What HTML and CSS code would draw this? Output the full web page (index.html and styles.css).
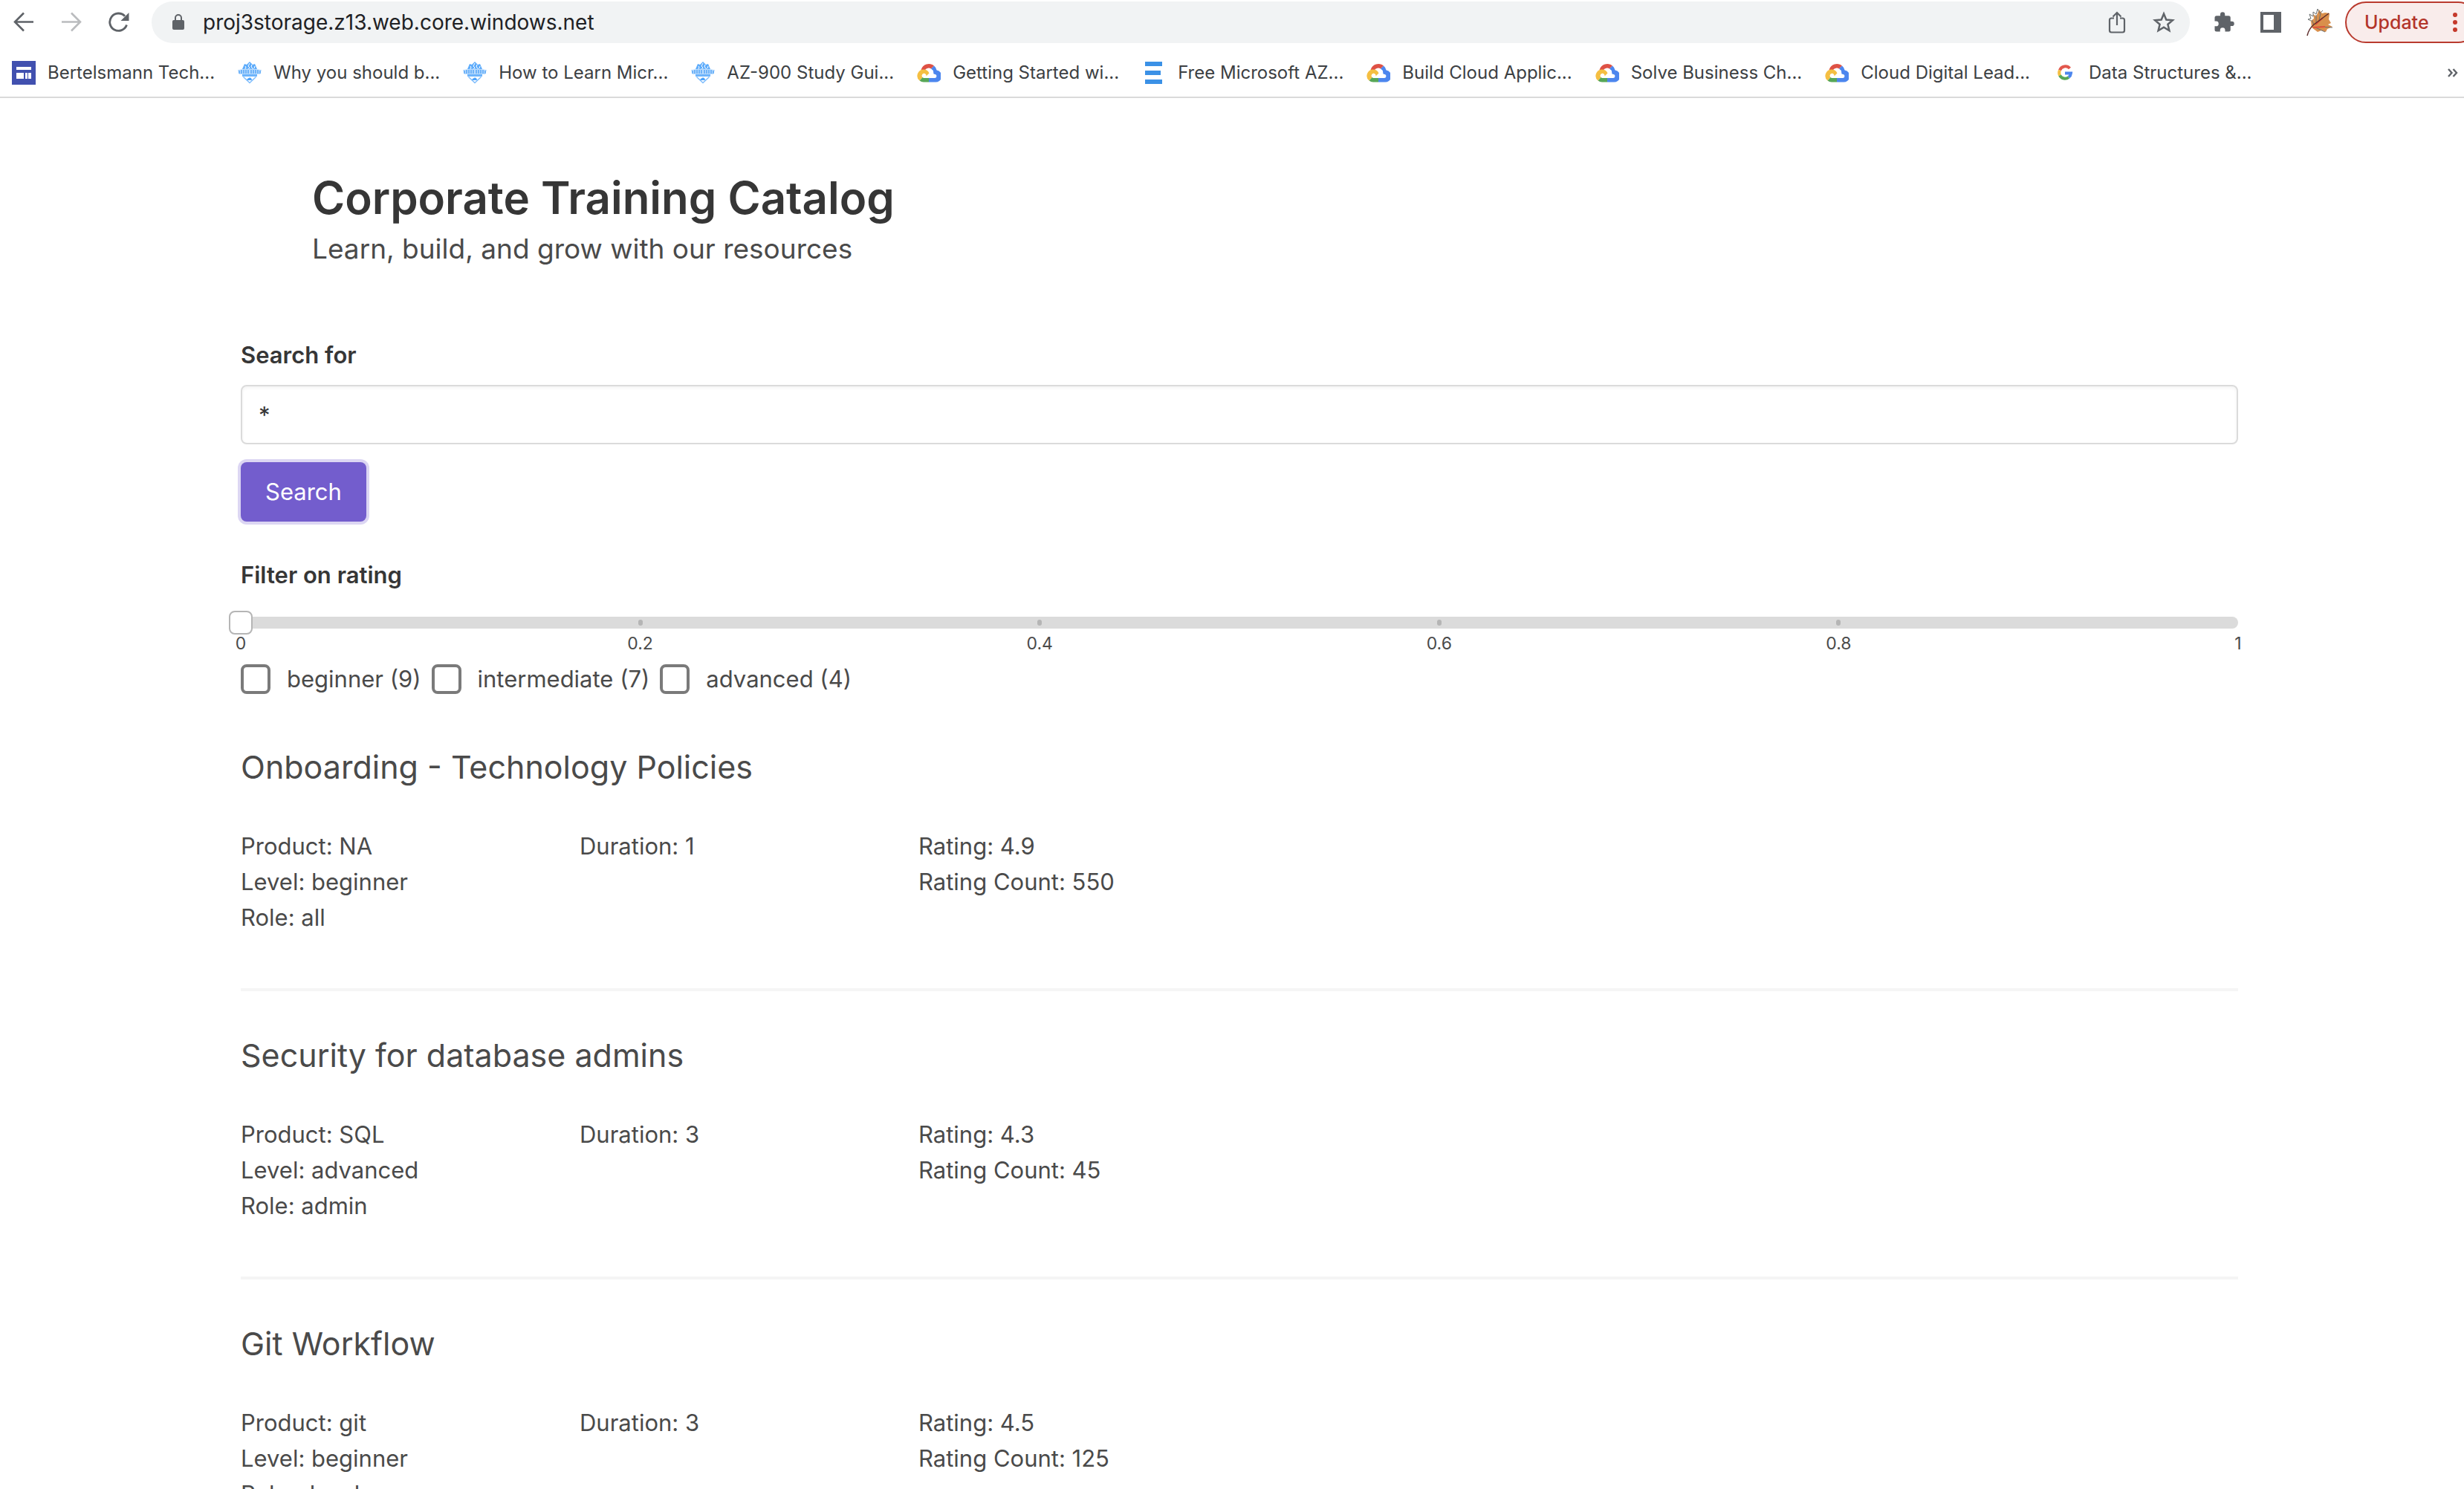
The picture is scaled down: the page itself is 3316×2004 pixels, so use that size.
FILE: index.html
```html
<!DOCTYPE html>
<html lang="en">
<head>
<meta charset="utf-8">
<title>Corporate Training Catalog</title>
<link rel="stylesheet" href="styles.css">
</head>
<body>
<svg class="defs" aria-hidden="true">
  <symbol id="badge" viewBox="0 0 32 32">
    <path d="M16 1l4 4 3-1 3 7H6l3-7 3 1z" fill="#5eacfb"/>
    <path d="M16 3l-2 4 2 2-3 3M19 5l-1 3 3 3M10 7l1 2-2 3M23 7l-1 3" fill="none" stroke="#fff" stroke-width="1"/>
    <path d="M0 12q16-3 32 0l-2 6H2z" fill="#b9dbfd"/>
    <path d="M2 13v4M5 12v5M8 12v5M11 12v5M14 12v5M18 12v5M21 12v5M24 12v5M27 12v5M30 13v4" stroke="#3f98f5" stroke-width="1.200"/>
    <path d="M6 18h20v3H6z" fill="#6db4fb"/>
    <path d="M7.500 21.500L16 29.500l8.500-8" fill="none" stroke="#7fbdfc" stroke-width="1.500"/>
    <path d="M12.500 26a2 2 0 0 1 1.500-2.500 2.600 2.600 0 0 1 4.500.8 1 1 0 0 1 0 1.700z" fill="#4da3fb"/>
  </symbol>
  <symbol id="cloud" viewBox="0 0 32 32">
    <path d="M5.500 12A11 11 0 0 1 23 6.500L19 10.500A6 6 0 0 0 11 12z" fill="#de5145"/>
    <path d="M23 6.500a11 11 0 0 1 3.600 6A8 8 0 0 1 24 28.500h-8V23h8a2.600 2.600 0 0 0 .5-5.100l-2-.5-.3-2A6 6 0 0 0 19 10.500z" fill="#4c86ee"/>
    <path d="M16 23v5.500H9a9 9 0 0 1-5.500-2L7.500 22a3 3 0 0 0 1.500 1z" fill="#57a757"/>
    <path d="M3.500 26.500A8.500 8.500 0 0 1 9 11.500a8.500 8.500 0 0 1 7.500 5l-4 4a3 3 0 1 0-5 1.500z" fill="#f5bf42"/>
  </symbol>
</svg>

<header class="browser">
  <div class="toolbar">
    <nav class="history">
      <button class="icon-button" type="button" aria-label="Back"><svg width="28" height="28" viewBox="0 0 28 28"><path d="M27 13.500H3M14 1.500L2 13.500l12 12" fill="none" stroke="#5f6368" stroke-width="2.600"/></svg></button>
      <button class="icon-button" type="button" aria-label="Forward"><svg width="28" height="28" viewBox="0 0 28 28"><path d="M1 13.500h24M14 1.500l12 12-12 12" fill="none" stroke="#babcbe" stroke-width="2.600"/></svg></button>
      <button class="icon-button" type="button" aria-label="Reload"><svg width="28" height="28" viewBox="0 0 28 28"><path d="M24.500 17.500A11.700 11.700 0 1 1 22 5.700" fill="none" stroke="#5f6368" stroke-width="2.800"/><path d="M27.500 1v11h-11z" fill="#5f6368"/></svg></button>
    </nav>
    <div class="omnibox">
      <svg width="18" height="24" viewBox="0 0 18 24"><rect x="1" y="9" width="16" height="13" rx="2" fill="#5f6368"/><path d="M5 10V6a4 4 0 0 1 8 0v4" fill="none" stroke="#5f6368" stroke-width="2"/></svg>
      <input class="url" type="text" aria-label="Address" value="proj3storage.z13.web.core.windows.net">
      <button class="icon-button" type="button" aria-label="Share"><svg width="28" height="32" viewBox="0 0 28 32"><path d="M10 10.500H6.500a2.500 2.500 0 0 0-2.500 2.500v14a2.500 2.500 0 0 0 2.500 2.500h15a2.500 2.500 0 0 0 2.500-2.500v-14a2.500 2.500 0 0 0-2.500-2.500H18M14 20V4M8.500 8.500L14 3l5.500 5.500" fill="none" stroke="#5f6368" stroke-width="2.200"/></svg></button>
      <button class="icon-button" type="button" aria-label="Bookmark this page"><svg width="30" height="30" viewBox="0 0 30 30"><path d="M15 3.500l3.300 8 8.700.7-6.600 5.600 2 8.400-7.400-4.500-7.400 4.500 2-8.400L3 12.200l8.700-.7z" fill="none" stroke="#5f6368" stroke-width="2.500"/></svg></button>
    </div>
    <div class="actions">
      <button class="icon-button" type="button" aria-label="Extensions"><svg width="30" height="30" viewBox="0 0 24 24"><path d="M20.500 11H19V7a2 2 0 0 0-2-2h-4V3.500a2.500 2.500 0 0 0-5 0V5H4a2 2 0 0 0-2 2v3.800h1.500a2.700 2.700 0 0 1 0 5.400H2V20a2 2 0 0 0 2 2h3.800v-1.500a2.700 2.700 0 0 1 5.400 0V22H17a2 2 0 0 0 2-2v-4h1.500a2.500 2.500 0 0 0 0-5z" fill="#5f6368"/></svg></button>
      <button class="icon-button" type="button" aria-label="Side panel"><svg width="28" height="28" viewBox="0 0 28 28"><path fill-rule="evenodd" d="M0 0h28v28H0zM4 4v20h14V4z" fill="#5f6368"/></svg></button>
      <button class="icon-button" type="button" aria-label="Profile"><svg width="36" height="38" viewBox="0 0 36 38"><path d="M7 26L6 17l4-3-1-6 4 3 4-9 4 5 4-1 6 1-1 8 3 5-4 2 6 3-7 3-2 4-6-2-5 2z" fill="#d98f4b"/><path d="M6 17l-4-2 4-1-2-6 5 3 0-6 4 3 2-7 3 6 4-4M10 22l-3-6M13 19l0-10M17 16l2-9M12 26l13 6M18 25l17 1" fill="none" stroke="#6a6f70" stroke-width="1"/><path d="M9 26l16-1M12 22l10-9" fill="none" stroke="#e0503a" stroke-width="2"/><path d="M1 37q2-9 9-15L30 7" fill="none" stroke="#5e2d2a" stroke-width="1.500"/></svg></button>
      <button class="update" type="button"><span>Update</span><svg width="8" height="28" viewBox="0 0 8 28"><circle cx="4" cy="4" r="3" fill="#c5392b"/><circle cx="4" cy="14" r="3" fill="#c5392b"/><circle cx="4" cy="24" r="3" fill="#c5392b"/></svg></button>
    </div>
  </div>
  <nav class="bookmarks" aria-label="Bookmarks">
    <a href="#"><svg viewBox="0 0 32 32"><path d="M0 0h32v32H0z" fill="#4150af"/><path d="M6 8h20v4H6zM6 16h10v8H6zM18 16h3v8h-3zM22 16h4v8h-4z" fill="#fff"/></svg>Bertelsmann Tech...</a>
    <a href="#"><svg><use href="#badge"/></svg>Why you should b...</a>
    <a href="#"><svg><use href="#badge"/></svg>How to Learn Micr...</a>
    <a href="#"><svg><use href="#badge"/></svg>AZ-900 Study Gui...</a>
    <a href="#"><svg><use href="#cloud"/></svg>Getting Started wi...</a>
    <a href="#"><svg viewBox="0 0 32 32"><path d="M4 1h23v6H4zM4 13h21v6H4zM4 25h23v6H4z" fill="#3b91e6"/></svg>Free Microsoft AZ...</a>
    <a href="#"><svg><use href="#cloud"/></svg>Build Cloud Applic...</a>
    <a href="#"><svg><use href="#cloud"/></svg>Solve Business Ch...</a>
    <a href="#"><svg><use href="#cloud"/></svg>Cloud Digital Lead...</a>
    <a href="#"><svg viewBox="0 0 32 32"><g fill="none" stroke-width="4"><path d="M22.500 10A8 8 0 0 0 9 12.500" stroke="#e2574c"/><path d="M9 12.500a8 8 0 0 0 0 7" stroke="#f5bf42"/><path d="M9 19.500A8 8 0 0 0 21 22" stroke="#57a757"/><path d="M21 22a8 8 0 0 0 3-5.500h-8" stroke="#4c86ee"/></g></svg>Data Structures &amp;...</a>
    <button class="more" type="button" aria-label="More bookmarks"><svg width="14" height="12" viewBox="0 0 14 12"><path d="M1 1l4.500 5L1 11M7.500 1L12 6l-4.500 5" fill="none" stroke="#5f6368" stroke-width="2.400"/></svg></button>
  </nav>
</header>

<main class="page">
  <div class="hero">
    <h1>Corporate Training Catalog</h1>
    <p>Learn, build, and grow with our resources</p>
  </div>

  <form class="search">
    <label for="query">Search for</label>
    <input id="query" type="text" value="*">
    <button type="button">Search</button>
  </form>

  <section class="filters">
    <label for="rating">Filter on rating</label>
    <div class="slider">
      <div class="track"><i></i><i class="dot"></i><i class="dot"></i><i class="dot"></i><i class="dot"></i><i></i></div>
      <input id="rating" type="range" min="0" max="1" step="0.2" value="0">
    </div>
    <div class="scale"><span>0</span><span>0.2</span><span>0.4</span><span>0.6</span><span>0.8</span><span>1</span></div>
    <div class="levels">
      <label><input type="checkbox">beginner (9)</label>
      <label><input type="checkbox">intermediate (7)</label>
      <label><input type="checkbox">advanced (4)</label>
    </div>
  </section>

  <article class="result">
    <h2>Onboarding - Technology Policies</h2>
    <div class="facts">
      <div><p>Product: NA</p><p>Level: beginner</p><p>Role: all</p></div>
      <div><p>Duration: 1</p></div>
      <div><p>Rating: 4.9</p><p>Rating Count: 550</p></div>
    </div>
  </article>
  <article class="result">
    <h2>Security for database admins</h2>
    <div class="facts">
      <div><p>Product: SQL</p><p>Level: advanced</p><p>Role: admin</p></div>
      <div><p>Duration: 3</p></div>
      <div><p>Rating: 4.3</p><p>Rating Count: 45</p></div>
    </div>
  </article>
  <article class="result">
    <h2>Git Workflow</h2>
    <div class="facts">
      <div><p>Product: git</p><p>Level: beginner</p><p>Role: developer</p></div>
      <div><p>Duration: 3</p></div>
      <div><p>Rating: 4.5</p><p>Rating Count: 125</p></div>
    </div>
  </article>
</main>
</body>
</html>
```
FILE: styles.css
```css
* {
  box-sizing: border-box;
}

body {
  margin: 0;
  height: 100vh;
  display: flex;
  flex-direction: column;
  overflow: hidden;
  background: #fff;
  color: #4a4a4a;
  font-family: Inter, "Liberation Sans", sans-serif;
  font-size: 31px;
  line-height: 48px;
}

h1, h2, p {
  margin: 0;
}

button, input {
  font: inherit;
  margin: 0;
}

svg {
  display: block;
  flex: none;
}

.defs {
  position: absolute;
  width: 0;
  height: 0;
}

/* Browser chrome */
.browser {
  flex: none;
  border-bottom: 2px solid #dadada;
  overflow: hidden;
}

.toolbar {
  display: flex;
  align-items: center;
  margin-right: -20px;
  padding: 2px 0;
}

.history {
  display: flex;
  gap: 36px;
  padding: 0 30px 0 18px;
}

.icon-button {
  display: block;
  padding: 0;
  border: 0;
  background: none;
}

.omnibox {
  flex: 1;
  display: flex;
  align-items: center;
  height: 56px;
  padding: 0 20px 0 27px;
  border-radius: 28px;
  background: #f1f3f4;
}

.url {
  flex: 1;
  min-width: 0;
  padding: 0 0 0 24px;
  border: 0;
  background: none;
  color: #202124;
  font-size: 28px;
}

.omnibox .icon-button + .icon-button {
  margin-left: 34px;
}

.actions {
  display: flex;
  align-items: center;
  gap: 34px;
  padding-left: 31px;
}

.update {
  display: flex;
  align-items: center;
  justify-content: space-between;
  width: 180px;
  height: 56px;
  margin-left: -18px;
  padding: 0 26px 0 24px;
  border: 2px solid #b93a2e;
  border-radius: 28px;
  background: #f9eceb;
  color: #b3352a;
  font-size: 25px;
  font-weight: 500;
}

.bookmarks {
  display: flex;
  align-items: center;
  gap: 31px;
  padding: 22px 8px 16px 16px;
}

.bookmarks a {
  display: flex;
  gap: 16px;
  color: #3c4043;
  font-size: 24px;
  line-height: 32px;
  text-decoration: none;
  white-space: nowrap;
}

.bookmarks a svg {
  width: 32px;
  height: 32px;
}

.more {
  margin-left: auto;
  padding: 0;
  border: 0;
  background: none;
}

/* Catalog */
.page {
  flex: 1;
  min-height: 0;
  overflow: hidden;
  padding: 98px 304px 0 324px;
}

.hero {
  padding: 0 96px 94px;
}

h1 {
  color: #363636;
  font-size: 60px;
  font-weight: 600;
  line-height: 72px;
}

.hero p {
  margin-top: 8px;
  font-size: 37px;
  line-height: 50px;
}

.search {
  display: flex;
  flex-direction: column;
  align-items: flex-start;
}

.search > label,
.filters > label {
  display: block;
  color: #363636;
  font-weight: 600;
}

.search label {
  margin-bottom: 16px;
}

.search input {
  width: 100%;
  height: 80px;
  margin-bottom: 24px;
  padding: 0 22px;
  border: 2px solid #dbdbdb;
  border-radius: 8px;
  box-shadow: inset 0 2px 4px rgba(10, 10, 10, 0.05);
  background: #fff;
  color: #363636;
}

.search button {
  height: 80px;
  padding: 0 33px;
  border: 0;
  border-radius: 8px;
  box-shadow: 0 0 0 4px #dcd6f3;
  background: #735dcd;
  color: #fff;
}

.filters {
  padding-top: 48px;
}

.slider {
  display: grid;
  align-items: center;
  margin: 24px -16px 0;
}

.track,
.slider input {
  grid-area: 1 / 1;
}

.track {
  display: flex;
  align-items: center;
  justify-content: space-between;
  height: 16px;
  margin: 0 16px;
  border-radius: 8px;
  background: #dbdbdb;
}

.track i {
  display: flex;
  justify-content: center;
  width: 0;
}

.dot::before {
  content: "";
  flex: none;
  width: 6px;
  height: 8px;
  border-radius: 3px;
  background: #b5b5b5;
}

.slider input {
  width: 100%;
  height: 32px;
  appearance: none;
  background: none;
}

.slider input::-webkit-slider-thumb {
  appearance: none;
  width: 32px;
  height: 32px;
  border: 2px solid #b5b5b5;
  border-radius: 8px;
  background: #fff;
}

.scale {
  display: flex;
  justify-content: space-between;
  font-size: 23px;
  line-height: 24px;
}

.scale span {
  display: flex;
  justify-content: center;
  width: 0;
}

.levels {
  display: flex;
  gap: 14px;
  padding-top: 12px;
}

.levels label {
  display: flex;
  align-items: center;
  gap: 22px;
}

.levels input {
  appearance: none;
  width: 40px;
  height: 40px;
  border: 4px solid #7a7a7a;
  border-radius: 8px;
}

.result {
  padding-top: 59px;
}

.filters + .result {
  padding-top: 67px;
}

.result:not(:last-child) {
  padding-bottom: 71px;
  border-bottom: 4px solid #f5f5f5;
}

h2 {
  font-size: 43px;
  font-weight: 400;
  line-height: 54px;
}

.facts {
  display: grid;
  grid-template-columns: repeat(6, 1fr);
  column-gap: 48px;
  padding-top: 56px;
}
```
